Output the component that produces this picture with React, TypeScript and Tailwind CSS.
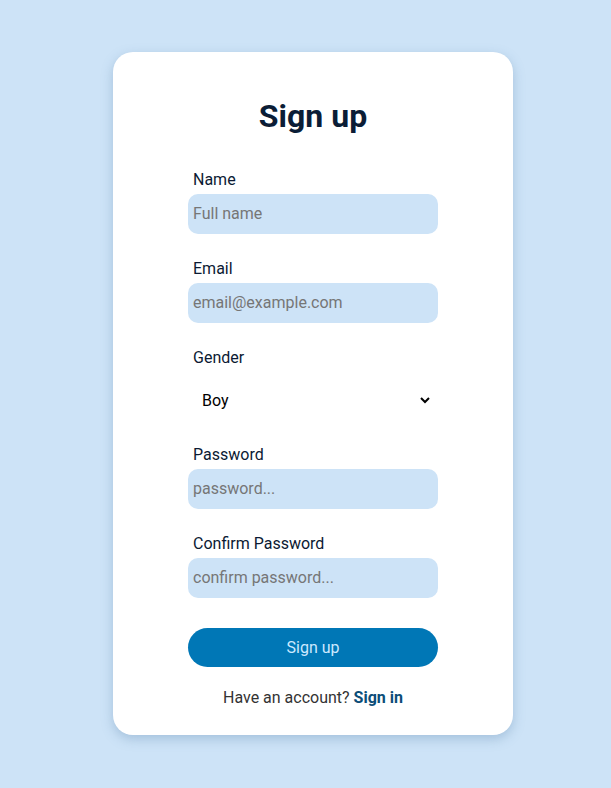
import { useState } from "react";

// Sign up form card
function Field({ label, placeholder, type = "text" }: { label: string; placeholder: string; type?: string }) {
  return (
    <div className="flex flex-col">
      <label className="pl-[5px] pt-px text-base leading-6 text-[#0b1a33]">{label}</label>
      <input
        type={type}
        placeholder={placeholder}
        className="mt-[2px] h-10 w-full rounded-[10px] bg-[#cde3f7] px-[5px] pb-px text-base text-[#0b1a33] outline-none placeholder:text-[#767676]"
      />
    </div>
  );
}

export default function App() {
  const [gender, setGender] = useState("boy");

  return (
    <div className="flex min-h-[788px] w-full justify-center bg-[#cde3f7] pl-[15px] pt-[52px] font-['Roboto',sans-serif]">
      <div className="flex h-[683px] w-[400px] flex-col items-center rounded-[20px] bg-white px-[75px] pt-[44px] shadow-[0_4px_12px_rgba(90,130,170,0.35)]">
        <h1 className="text-[32px] font-bold leading-10 text-[#0b1d36]">Sign up</h1>

        <form className="mt-[31px] flex w-[250px] flex-col gap-[22px]" onSubmit={(e) => e.preventDefault()}>
          <Field label="Name" placeholder="Full name" />
          <Field label="Email" placeholder="email@example.com" type="email" />

          <div className="flex flex-col">
            <label className="pl-[5px] pt-px text-base leading-6 text-[#0b1a33]">Gender</label>
            <select
              value={gender}
              onChange={(e) => setGender(e.target.value)}
              className="mt-[10px] h-10 w-[245px] pl-[10px] text-base text-black outline-none"
            >
              <option value="boy">Boy</option>
              <option value="girl">Girl</option>
            </select>
          </div>

          <Field label="Password" placeholder="password..." type="password" />
          <Field label="Confirm Password" placeholder="confirm password..." type="password" />

          <button
            type="submit"
            className="mt-2 h-[39px] w-full rounded-full bg-[#0077b6] text-base text-[#cde9ff]"
          >
            Sign up
          </button>
        </form>

        <p className="mt-[19px] text-base leading-6 text-[#333]">
          Have an account? <a className="font-bold text-[#0b4d78]">Sign in</a>
        </p>
      </div>
    </div>
  );
}
